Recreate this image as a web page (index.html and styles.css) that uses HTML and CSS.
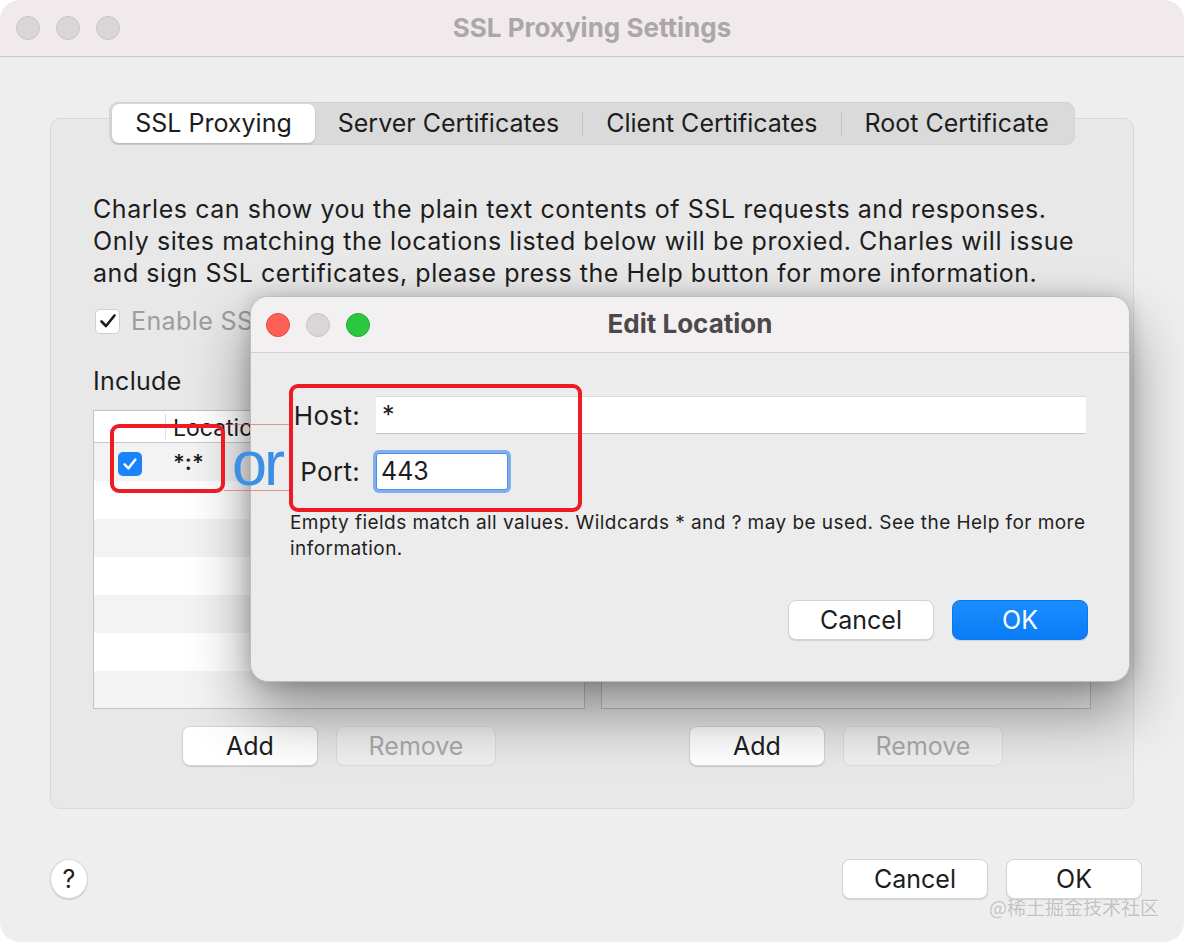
FILE: index.html
```html
<!DOCTYPE html>
<html>
<head>
<meta charset="utf-8">
<link rel="stylesheet" href="styles.css">
</head>
<body>
<div class="window">
  <div class="titlebar">
    <div class="lights">
      <span class="light"></span><span class="light"></span><span class="light"></span>
    </div>
    <div class="title">SSL Proxying Settings</div>
    <div></div>
  </div>

  <div class="panel">
    <div class="tabs">
      <div class="tab active">SSL Proxying</div>
      <div class="tab">Server Certificates</div>
      <span class="sep"></span>
      <div class="tab">Client Certificates</div>
      <span class="sep"></span>
      <div class="tab">Root Certificate</div>
    </div>

    <p class="desc">Charles can show you the plain text contents of SSL requests and responses.<br>Only sites matching the locations listed below will be proxied. Charles will issue<br>and sign SSL certificates, please press the Help button for more information.</p>

    <div class="enable">
      <span class="cb"><svg width="20" height="20" viewBox="0 0 20 20"><path d="M3.5 10.5 L8 15 L16.5 4.5" fill="none" stroke="#1b1b1b" stroke-width="2.6" stroke-linecap="round" stroke-linejoin="round"/></svg></span>
      <span>Enable SSL Proxying</span>
    </div>

    <div class="lists">
      <div class="list-col">
        <div class="list-title">Include</div>
        <div class="table">
          <div class="thead"><div class="th-check"></div><div class="th">Locatio</div></div>
          <div class="row">
            <div class="check-cell"><span class="cbb"><svg width="18" height="18" viewBox="0 0 20 20"><path d="M4 10.5 L8.3 14.8 L16 5" fill="none" stroke="#fff" stroke-width="2.8" stroke-linecap="round" stroke-linejoin="round"/></svg></span></div>
            <div class="loc">*:*</div>
          </div>
          <div class="row"></div>
          <div class="row"></div>
          <div class="row"></div>
          <div class="row"></div>
          <div class="row"></div>
          <div class="row"></div>
        </div>
        <div class="btns">
          <button class="btn btn-add">Add</button>
          <button class="btn btn-remove" disabled>Remove</button>
        </div>
      </div>
      <div class="list-col">
        <div class="list-title">Exclude</div>
        <div class="table">
          <div class="thead"><div class="th-check"></div><div class="th">Location</div></div>
          <div class="row"></div>
          <div class="row"></div>
          <div class="row"></div>
          <div class="row"></div>
          <div class="row"></div>
          <div class="row"></div>
          <div class="row"></div>
        </div>
        <div class="btns">
          <button class="btn btn-add">Add</button>
          <button class="btn btn-remove" disabled>Remove</button>
        </div>
      </div>
    </div>
  </div>

  <div class="footer">
    <button class="help">?</button>
    <div class="spacer"></div>
    <div class="footer-btns">
      <button class="btn btn-cancel">Cancel</button>
      <button class="btn btn-ok-main">OK</button>
    </div>
  </div>

  <div class="dialog">
    <div class="d-titlebar">
      <div class="lights">
        <span class="light red"></span><span class="light"></span><span class="light green"></span>
      </div>
      <div class="d-title">Edit Location</div>
      <div></div>
    </div>
    <div class="d-body">
      <div class="form">
        <label class="f-label">Host:</label>
        <div class="f-input host">*</div>
        <label class="f-label">Port:</label>
        <div class="f-input port">443</div>
      </div>
      <p class="d-help">Empty fields match all values. Wildcards * and ? may be used. See the Help for more<br>information.</p>
      <div class="d-btns">
        <button class="btn btn-cancel">Cancel</button>
        <button class="btn btn-primary">OK</button>
      </div>
    </div>
  </div>

  <div class="anno-line l1"></div>
  <div class="anno-line l2"></div>
  <div class="anno-box b1"></div>
  <div class="anno-box b2"></div>
  <div class="anno-or">or</div>

  <div class="watermark">@稀土掘金技术社区</div>
</div>
</body>
</html>
```

FILE: styles.css
```css
* { box-sizing: border-box; }
html, body { margin: 0; padding: 0; }
body {
  width: 1184px;
  height: 942px;
  background: #ffffff;
  font-family: Inter, "Liberation Sans", "Noto Sans CJK SC", sans-serif;
  color: #1d1d1d;
  overflow: hidden;
}
.window {
  position: relative;
  width: 1184px;
  height: 942px;
  background: #eeeeee;
  border-radius: 20px;
  overflow: hidden;
  display: flex;
  flex-direction: column;
}
.titlebar {
  height: 57px;
  flex: none;
  background: #f0eaed;
  border-bottom: 1px solid #cdc9cb;
  display: grid;
  grid-template-columns: 1fr auto 1fr;
  align-items: center;
  padding-left: 16px;
}
.lights { display: flex; gap: 16px; }
.light {
  width: 24px;
  height: 24px;
  border-radius: 50%;
  background: #d9d5d8;
  border: 1px solid #c8c4c7;
}
.light.red { background: #fe5f57; border-color: #e5483f; }
.light.green { background: #2ac840; border-color: #1fae33; }
.title {
  font-weight: 700;
  font-size: 26px;
  color: #aba6a9;
  padding-right: 16px;
  margin-top: -2px;
}

/* main panel */
.panel {
  margin: 61px 50px 0;
  background: #e8e8e8;
  border: 1px solid #dadada;
  border-radius: 10px;
  padding: 0 42px 42px;
  display: flex;
  flex-direction: column;
}
.tabs {
  align-self: center;
  margin-top: -17px;
  display: flex;
  align-items: center;
  background: #dadada;
  border-radius: 9px;
  padding: 2px;
  height: 43px;
  border: 1px solid #d2d2d2;
}
.tab {
  padding: 0 23px;
  font-size: 25px;
  line-height: 39px;
  color: #1d1d1d;
}
.tab.active {
  background: #ffffff;
  border-radius: 7px;
  box-shadow: 0 1px 2px rgba(0,0,0,0.2);
}
.sep { width: 1px; height: 24px; background: #c2c2c2; }

.desc {
  margin: 48px 0 0;
  font-size: 25px;
  letter-spacing: 0.55px;
  line-height: 32px;
  color: #1d1d1d;
  white-space: nowrap;
}
.enable {
  margin-top: 16px;
  height: 32px;
  display: flex;
  align-items: center;
  gap: 11px;
  padding-left: 2px;
  font-size: 25px;
  letter-spacing: 0.4px;
  color: #9d9d9d;
}
.cb {
  width: 25px;
  height: 25px;
  background: #ffffff;
  border: 1px solid #cfcfcf;
  border-radius: 5px;
  display: flex;
  align-items: center;
  justify-content: center;
}
.lists {
  margin-top: 28px;
  display: grid;
  grid-template-columns: 492px 490px;
  gap: 16px;
}
.list-title { font-size: 25px; letter-spacing: 0.3px; line-height: 32px; }
.table {
  margin-top: 13px;
  height: 299px;
  border: 1px solid #c3c3c3;
  background: #ffffff;
  display: flex;
  flex-direction: column;
  overflow: hidden;
}
.thead {
  height: 32px;
  flex: none;
  display: flex;
  border-bottom: 1px solid #c8c8c8;
}
.th-check { width: 72px; border-right: 1px solid #dcdcdc; margin: 3px 0; }
.th {
  padding-left: 7px;
  padding-top: 4px;
  font-size: 23px;
  line-height: 26px;
  height: 31px;
  white-space: nowrap;
  overflow: hidden;
}
.row { height: 38px; flex: none; display: flex; align-items: center; }
.row:nth-child(even) { background: #f3f3f3; }
.check-cell { width: 72px; display: flex; justify-content: center; padding-top: 3px; }
.cbb {
  width: 24px;
  height: 24px;
  border-radius: 5px;
  background: #1a82fb;
  display: flex;
  align-items: center;
  justify-content: center;
}
.loc { padding-left: 7px; font-size: 22px; font-weight: 600; }

.btns {
  margin-top: 17px;
  display: flex;
  justify-content: center;
  gap: 18px;
}
.btn {
  height: 40px;
  padding: 0;
  border-radius: 8px;
  font-family: inherit;
  font-size: 25px;
  color: #1d1d1d;
  background: #ffffff;
  border: 1px solid #d3d3d3;
  box-shadow: 0 1px 1px rgba(0,0,0,0.12);
}
.btn-add { width: 136px; }
.btn-remove {
  width: 160px;
  background: #efefef;
  color: #a9a9a9;
  border-color: #dcdcdc;
  box-shadow: none;
}

/* footer */
.footer {
  display: flex;
  align-items: center;
  padding: 50px 42px 0 50px;
}
.help {
  width: 38px;
  height: 40px;
  padding: 0;
  border-radius: 50%;
  background: #ffffff;
  border: 1px solid #d6d6d6;
  box-shadow: 0 1px 1px rgba(0,0,0,0.15);
  font-family: inherit;
  font-size: 25px;
  color: #1d1d1d;
}
.spacer { flex: 1; }
.footer-btns { display: flex; gap: 18px; }
.btn-cancel { width: 146px; }
.btn-ok-main { width: 136px; }

/* dialog */
.dialog {
  position: absolute;
  left: 250px;
  top: 296px;
  width: 880px;
  height: 386px;
  background: #ececec;
  border: 1px solid #bdbdbd;
  border-radius: 18px;
  overflow: hidden;
  box-shadow: 0 30px 60px rgba(0,0,0,0.42), 0 0 18px rgba(0,0,0,0.18);
  display: flex;
  flex-direction: column;
}
.d-titlebar {
  height: 56px;
  flex: none;
  background: #f3f0f2;
  border-bottom: 1px solid #d2d0d1;
  display: grid;
  grid-template-columns: 1fr auto 1fr;
  align-items: center;
  padding-left: 15px;
}
.d-title {
  font-weight: 700;
  font-size: 26px;
  color: #4b494a;
  padding-right: 15px;
  margin-top: -3px;
}
.d-body { padding: 43px 43px 41px 39px; display: flex; flex-direction: column; }
.form {
  display: grid;
  grid-template-columns: 70px 1fr;
  column-gap: 16px;
  row-gap: 19px;
  align-items: center;
}
.f-label { text-align: right; font-size: 26px; letter-spacing: 0.3px; }
.f-input {
  height: 38px;
  background: #ffffff;
  border-top: 1px solid #dadada;
  border-bottom: 1px solid #c6c6c6;
  font-size: 25px;
  line-height: 36px;
  padding-left: 6px;
}
.f-input.port {
  width: 132px;
  height: 37px;
  border: 1px solid #4d8ee6;
  border-radius: 3px;
  box-shadow: 0 0 0 3px #80aeee;
  padding-left: 4px;
  line-height: 35px;
}
.d-help {
  margin: 20px 0 0;
  font-size: 19px;
  letter-spacing: 0.45px;
  line-height: 26px;
  color: #1f1f1f;
  white-space: nowrap;
}
.d-btns {
  margin-top: 38px;
  margin-right: -2px;
  display: flex;
  justify-content: flex-end;
  gap: 18px;
}
.btn-primary {
  width: 136px;
  color: #ffffff;
  border: 1px solid #0a78f0;
  background: linear-gradient(#1a8dff, #0a7cf6);
}

/* annotations */
.anno-box {
  position: absolute;
  border: 4px solid #ee1b24;
  border-radius: 9px;
}
.b1 { left: 289px; top: 384px; width: 293px; height: 128px; }
.b2 { left: 110px; top: 424px; width: 115px; height: 69px; }
.anno-line {
  position: absolute;
  left: 224px;
  width: 68px;
  height: 1px;
  background: rgba(230, 70, 70, 0.55);
}
.l1 { top: 424px; }
.l2 { top: 490px; }
.anno-or {
  position: absolute;
  left: 232px;
  top: 443px;
  height: 40px;
  font-family: "Liberation Sans", sans-serif;
  font-size: 63px;
  line-height: 40px;
  letter-spacing: -3px;
  color: #3b8fe4;
}
.watermark {
  position: absolute;
  left: 989px;
  top: 893px;
  font-family: "Noto Sans CJK SC", sans-serif;
  font-size: 19px;
  color: #c2c2c2;
  text-shadow: 0 0 1px #ffffff;
}
```
